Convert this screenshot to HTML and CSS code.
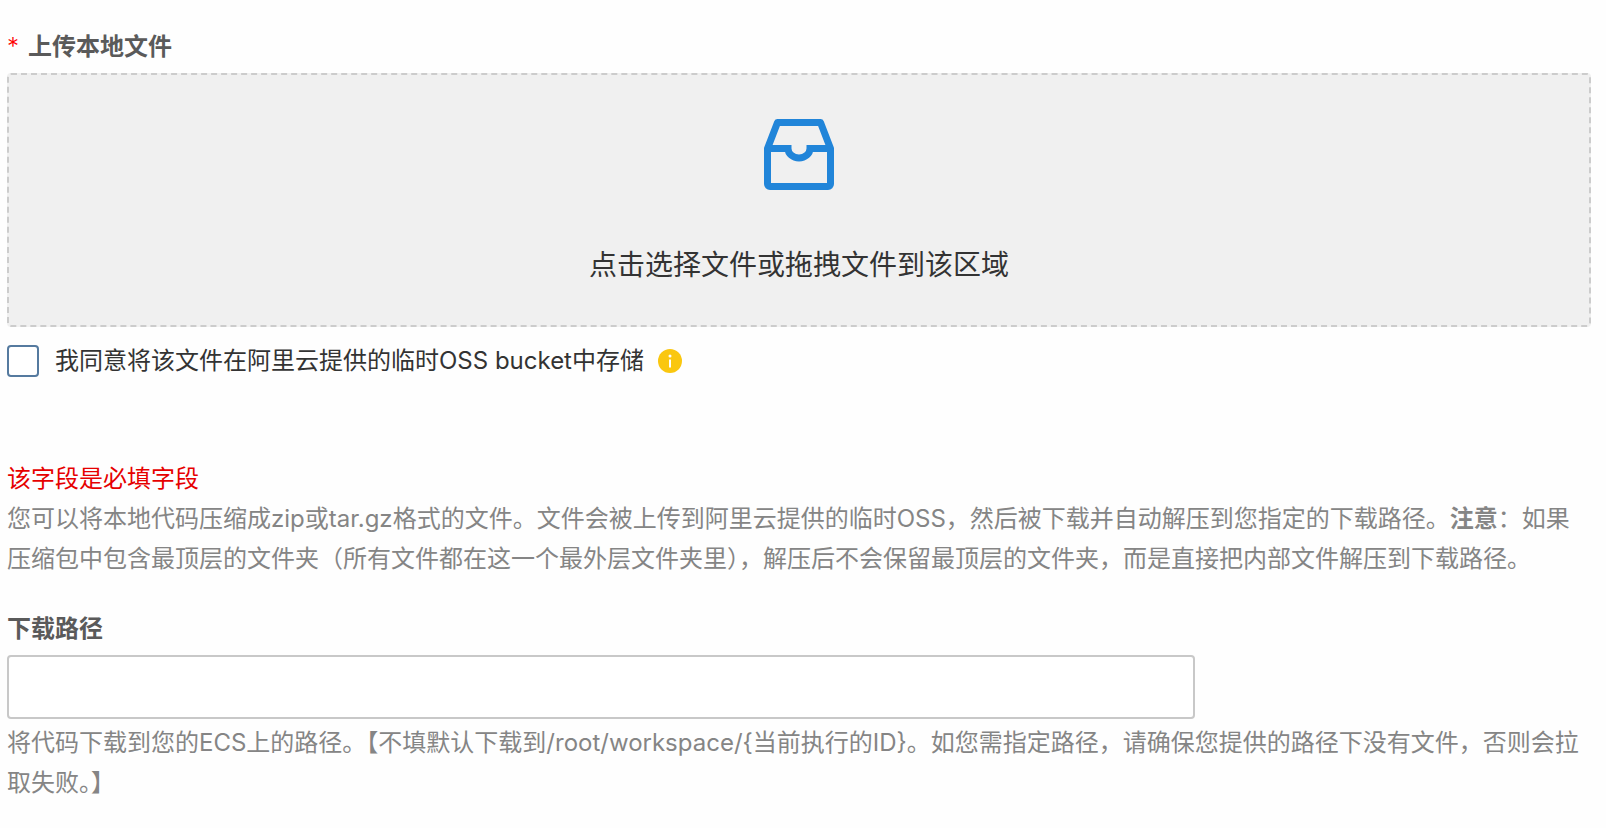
FILE: index.html
```
<!DOCTYPE html>
<html lang="zh-CN">
<head>
  <meta charset="UTF-8">
  <title>上传本地文件</title>
  <link rel="stylesheet" href="styles.css">
</head>
<body>
  <form class="container">
    <div class="form-group">
      <label class="form-label" for="file"><span class="required">*</span>上传本地文件</label>
      <label class="upload">
        <input class="upload-input" type="file" id="file" name="file">
        <svg class="upload-icon" viewBox="0 0 72 72" fill="none" stroke="#2185d9" stroke-width="7" stroke-linejoin="round">
          <path d="M4.500 29.500V65a2.500 2.500 0 0 0 2.500 2.500H65a2.500 2.500 0 0 0 2.500-2.500V29.500L57.500 3.500H14.500Z"/>
          <path d="M5 29.500H25A11 9.500 0 0 0 47 29.500H67" stroke-linejoin="miter"/>
        </svg>
        <span class="upload-text">点击选择文件或拖拽文件到该区域</span>
      </label>
      <div class="agree">
        <input class="checkbox" type="checkbox" id="agree" name="agree">
        <label for="agree">我同意将该文件在阿里云提供的临时OSS bucket中存储</label>
        <svg class="info-icon" viewBox="0 0 24 24">
          <circle cx="12" cy="12" r="12" fill="#fac70f"/>
          <circle cx="12" cy="7" r="1.500" fill="#fff"/>
          <path d="M12 10.500V18.500" stroke="#fff" stroke-width="2"/>
        </svg>
      </div>
      <div class="error">该字段是必填字段</div>
      <div class="help">您可以将本地代码压缩成zip或tar.gz格式的文件。文件会被上传到阿里云提供的临时OSS，然后被下载并自动解压到您指定的下载路径。<b>注意</b>：如果压缩包中包含最顶层的文件夹（所有文件都在这一个最外层文件夹里），解压后不会保留最顶层的文件夹，而是直接把内部文件解压到下载路径。</div>
    </div>
    <div class="form-group">
      <label class="form-label" for="path">下载路径</label>
      <input class="text-input" type="text" id="path" name="path">
      <div class="help">将代码下载到您的ECS上的路径。【不填默认下载到/root/workspace/{当前执行的ID}。如您需指定路径，请确保您提供的路径下没有文件，否则会拉取失败。】</div>
    </div>
  </form>
</body>
</html>
```
FILE: styles.css
```
* {
  box-sizing: border-box;
}

body {
  margin: 0;
  background-color: #fefefe;
  color: #333;
  font-family: Inter, "Noto Sans CJK SC", sans-serif;
  font-size: 24px;
  line-height: 40px;
}

.container {
  padding: 27px 15px 16px 7px;
}

.form-group {
  margin-bottom: 30px;
}

.form-label {
  display: block;
  margin-bottom: 6px;
  color: #5a5a5a;
  font-weight: 600;
}

.required {
  margin-right: 9px;
  color: #f00;
  font-weight: 300;
}

.upload {
  position: relative;
  display: flex;
  flex-direction: column;
  align-items: center;
  gap: 54px;
  padding: 44px 16px 40px;
  border: 2px dashed #ccc;
  border-radius: 4px;
  background-color: #f0f0f0;
  cursor: pointer;
}

/* 原生文件框透明铺满整个拖拽区域 */
.upload-input {
  position: absolute;
  inset: 0;
  width: 100%;
  height: 100%;
  opacity: 0;
  cursor: pointer;
}

.upload-icon {
  width: 72px;
  height: 72px;
}

.upload-text {
  font-size: 28px;
}

.agree {
  display: flex;
  align-items: center;
  margin-top: 14px;
  margin-bottom: 78px;
}

.checkbox {
  appearance: none;
  width: 32px;
  height: 32px;
  margin: 0 16px 0 0;
  border: 2px solid #557a9f;
  border-radius: 4px;
  background-color: #fff;
}

.checkbox:checked {
  background-color: #557a9f;
}

.info-icon {
  width: 24px;
  height: 24px;
  margin-left: 14px;
}

.error {
  color: #e60000;
}

.help {
  color: #858585;
}

.help b {
  font-weight: 700;
}

.text-input {
  display: block;
  width: 75%;
  height: 64px;
  margin-bottom: 4px;
  padding: 0 16px;
  border: 2px solid #c8c8c8;
  border-radius: 4px;
  background-color: #fff;
  font: inherit;
}
```
